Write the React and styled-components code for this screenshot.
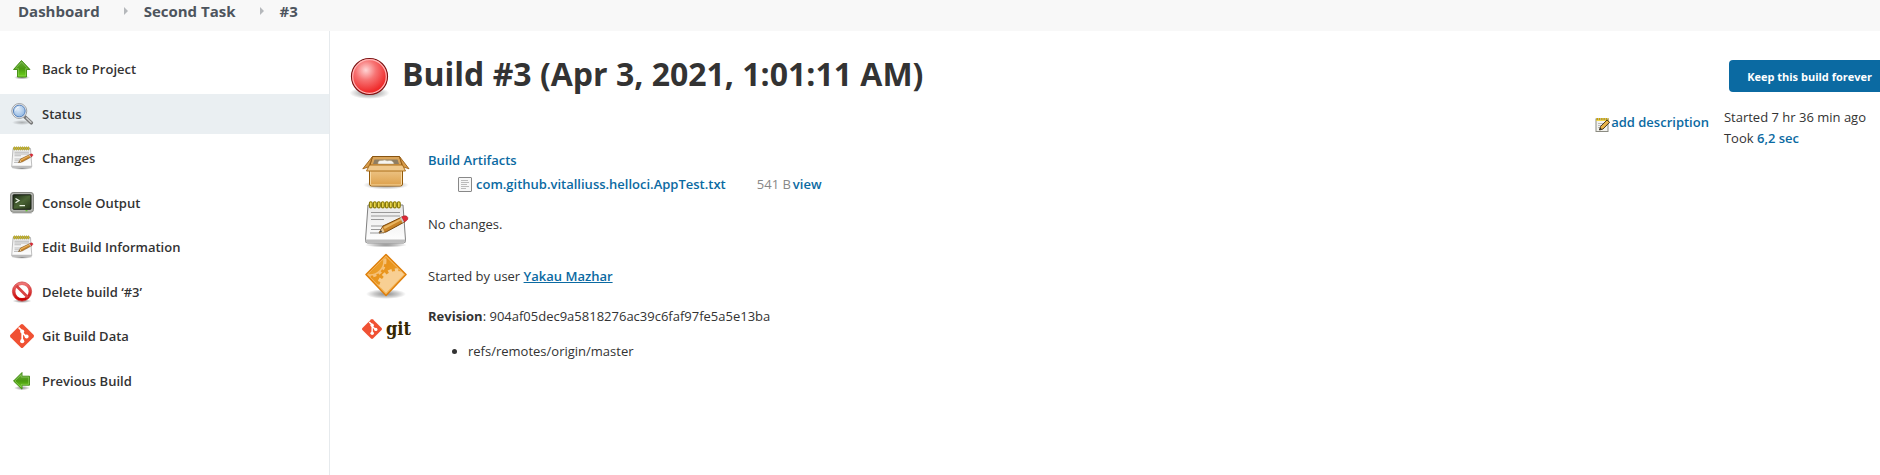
import React from 'react';
import styled, { createGlobalStyle, css } from 'styled-components';

const GlobalStyle = createGlobalStyle`
  * { box-sizing: border-box; }
  html, body { margin: 0; background: #fff; }
  body {
    font-family: "Open Sans", "Noto Sans", sans-serif;
    font-size: 13px;
    line-height: 20px;
    color: #333;
  }
  #root { overflow-x: hidden; }
`;

const Page = styled.div`
  display: flex;
  flex-direction: column;
  min-height: 100vh;
`;

const Breadcrumbs = styled.nav`
  display: flex;
  align-items: center;
  height: 31px;
  padding: 0 18px 10px;
  background: #f8f8f8;
`;

const Crumb = styled.a`
  font-size: 15px;
  font-weight: 700;
  color: #4d545d;
  text-decoration: none;
`;

const CrumbArrow = styled.svg`
  width: 4px;
  height: 8px;
  margin: 0 16px 0 24px;
`;

const Columns = styled.div`
  display: flex;
  flex: 1;
`;

const Sidebar = styled.aside`
  flex: none;
  width: 330px;
  padding-top: 16px;
  border-right: 1px solid #e6eaed;
`;

const TaskList = styled.ul`
  display: grid;
  grid-auto-rows: 1fr;
  align-items: center;
  min-height: 356px;
  margin: 0;
  padding: 0;
  list-style: none;
`;

const TaskLink = styled.a`
  display: flex;
  align-items: center;
  gap: 8px;
  height: 40px;
  padding-left: 10px;
  font-weight: 600;
  color: #333;
  text-decoration: none;
  ${(p) => p.$active && css`background: #eaeff2;`}
`;

const TaskIcon = styled.svg`
  flex: none;
  width: 24px;
  height: 24px;
`;

const Main = styled.main`
  flex: 1;
  display: flex;
  justify-content: space-between;
  padding: 20px 0 24px 20px;
`;

const Title = styled.h1`
  display: flex;
  align-items: center;
  gap: 13px;
  margin: 0 0 47px;
  height: 50px;
  font-size: 32px;
  line-height: 40px;
  font-weight: 700;
  color: #333;
  white-space: nowrap;
`;

const TitleText = styled.span`
  padding-bottom: 4px;
`;

const StatusBall = styled.svg`
  width: 39px;
  height: 44px;
  margin-top: 4px;
`;

const Summary = styled.div`
  display: grid;
  grid-template-columns: 48px auto;
  column-gap: 18px;
  row-gap: 4px;
  justify-content: start;
  align-items: center;
  padding-left: 12px;
`;

const SummaryIcon = styled.svg`
  width: 48px;
  height: 48px;
`;

const SummaryText = styled.div`
  line-height: 20px;
`;

const Link = styled.a`
  font-weight: 600;
  color: #0b6aa2;
  text-decoration: ${(p) => (p.$underlined ? 'underline' : 'none')};
`;

const FileRow = styled.div`
  display: flex;
  align-items: center;
  padding: 4px 0 0 30px;
`;

const FileIcon = styled.svg`
  width: 14px;
  height: 15px;
  margin-right: 4px;
`;

const FileSize = styled.span`
  margin: 0 2px 0 31px;
  color: #888;
`;

const Revision = styled.div`
  padding-top: 2px;
`;

const RefList = styled.ul`
  margin: 15px 0 0;
  padding-left: 40px;
`;

const GitLogo = styled.div`
  display: flex;
  align-items: center;
  gap: 4px;
  margin-bottom: 8px;
  font-family: "DejaVu Serif Condensed", "DejaVu Serif", serif;
  font-size: 18px;
  line-height: 20px;
  font-weight: 700;
  color: #362701;
`;

const GitMarkIcon = styled.svg`
  flex: none;
  width: 20px;
  height: 20px;
`;

const Side = styled.section`
  display: flex;
  flex-direction: column;
  align-items: flex-end;
  padding-top: 9px;
`;

const KeepButton = styled.button`
  height: 32px;
  padding: 1px 8px 0 18px;
  border: 0;
  border-radius: 4px 0 0 4px;
  background: #0b6aa2;
  color: #fff;
  font: 700 11px/20px "Open Sans", "Noto Sans", sans-serif;
  white-space: nowrap;
`;

const Details = styled.div`
  display: flex;
  align-items: center;
  gap: 15px;
  padding: 15px 14px 0 0;
  white-space: nowrap;
`;

const AddDescription = styled.a`
  display: flex;
  align-items: flex-end;
  margin-bottom: 12px;
  font-weight: 600;
  color: #0b6aa2;
  text-decoration: none;
`;

const SmallIcon = styled.svg`
  width: 16px;
  height: 16px;
`;

const Timing = styled.div`
  line-height: 21px;
`;

const Gradients = () => (
  <svg width="0" height="0" style={{ display: 'block' }} aria-hidden="true">
    <defs>
      <linearGradient id="green" x1="0" y1="0" x2="0" y2="1">
        <stop offset="0" stopColor="#6cab45" /><stop offset=".5" stopColor="#4a9a10" /><stop offset="1" stopColor="#6fd51c" />
      </linearGradient>
      <linearGradient id="paper" x1="0" y1="0" x2="0" y2="1">
        <stop offset="0" stopColor="#e9e9e9" /><stop offset="1" stopColor="#fff" />
      </linearGradient>
      <linearGradient id="red" x1="0" y1="0" x2="0" y2="1">
        <stop offset="0" stopColor="#e77" /><stop offset="1" stopColor="#c80000" />
      </linearGradient>
      <radialGradient id="ball" cx=".4" cy=".32" r=".62">
        <stop offset="0" stopColor="#ffd5d5" /><stop offset=".45" stopColor="#f77474" /><stop offset="1" stopColor="#ef2929" />
      </radialGradient>
      <radialGradient id="shade">
        <stop offset="0" stopColor="#000" stopOpacity=".45" /><stop offset=".6" stopColor="#000" stopOpacity=".2" /><stop offset="1" stopColor="#000" stopOpacity="0" />
      </radialGradient>
      <linearGradient id="screen" x1="0" y1="0" x2="1" y2="1">
        <stop offset="0" stopColor="#1d2b17" /><stop offset=".5" stopColor="#4b6535" /><stop offset="1" stopColor="#243319" />
      </linearGradient>
      <linearGradient id="carton" x1="0" y1="0" x2="0" y2="1">
        <stop offset="0" stopColor="#efc98e" /><stop offset="1" stopColor="#dda04a" />
      </linearGradient>
      <radialGradient id="glass" cx=".4" cy=".35" r=".7">
        <stop offset="0" stopColor="#e2edf9" /><stop offset="1" stopColor="#8db5e2" />
      </radialGradient>
      <linearGradient id="amber" x1="0" y1="0" x2="1" y2="1">
        <stop offset="0" stopColor="#e8890b" /><stop offset="1" stopColor="#eaa63a" />
      </linearGradient>
      <clipPath id="diamond"><path d="M24 5 42 22.500 24 41 6 22.500z" /></clipPath>
    </defs>
  </svg>
);

const UpArrow = () => (
  <>
    <ellipse cx="12" cy="20.500" rx="8" ry="2" fill="url(#shade)" />
    <path d="M11.500 3.500 20 12.500h-3.500v7.500h-9v-7.500H3.500z" fill="url(#green)" stroke="#3f8a10" strokeWidth=".9" />
    <path d="M11.600 5 17.500 11.600h-2v7.300h-7v-7.300H5.600z" fill="none" stroke="#a7dc79" strokeWidth=".6" opacity=".7" />
  </>
);

const LeftArrow = () => (
  <>
    <ellipse cx="12" cy="19" rx="8" ry="2.200" fill="url(#shade)" />
    <path d="M3.500 12 12 3.500v3.700h7.500v9H12v4z" fill="url(#green)" stroke="#3f8a10" strokeWidth=".9" />
    <path d="M5 12 11.200 5.700v2.400h7.400v7.200h-7.400v2.700z" fill="none" stroke="#b3e48a" strokeWidth=".6" opacity=".7" />
  </>
);

const Magnifier = () => (
  <>
    <ellipse cx="12" cy="20.500" rx="10" ry="2.500" fill="url(#shade)" opacity=".6" />
    <path d="m15 15 6.300 5.800" stroke="#777" strokeWidth="3.600" strokeLinecap="round" />
    <path d="m16.500 16 4.500 4.200" stroke="#ccc" strokeWidth="1.500" strokeLinecap="round" />
    <circle cx="9.300" cy="9" r="7.500" fill="#eee" stroke="#8e9096" strokeWidth=".8" />
    <circle cx="9.300" cy="9" r="5.900" fill="url(#glass)" stroke="#4c79b5" strokeWidth=".9" />
    <path d="M5.500 8.500c.5-2.500 2-3.500 4-3.500" stroke="#fff" fill="none" opacity=".8" />
  </>
);

const Notepad = () => (
  <>
    <ellipse cx="24" cy="45" rx="21" ry="2.500" fill="url(#shade)" />
    <path d="M6 5h35l2.500 35q.3 3-2 3h-36q-2.300 0-2-3z" fill="url(#paper)" stroke="#808080" />
    <path d="M3.500 39.500h39.800l.2 3h-40z" fill="#bdbdbd" />
    <path d="M9 12.500h29M9 16h29M9 19.500h13M9 26h26M9 29.500h18M8 33h14" stroke="#999" strokeWidth="1.200" />
    {[8, 12, 16, 20, 24, 28, 32, 36].map((x) => (
      <rect key={x} x={x - 0.6} y="1.700" width="2.800" height="6.200" rx="1.400" fill="#e9d64c" stroke="#857500" strokeWidth="1.100" />
    ))}
    <path d="m17 33 4-7L40 17l3 4.700L24 32z" fill="#c98428" stroke="#7b4a0e" />
    <path d="m21.500 27 18.300-9 .8 1.500-18 9.500z" fill="#e9b663" />
    <path d="m17 33 3.500-5.500 2 4.700z" fill="#e6c99a" />
    <path d="m17 33 2-3 1 2z" fill="#333" />
    <path d="m39.500 17 2.200-1.100q3.300-.7 4.100 1.800.2 2-1.200 2.800L42 22z" fill="#df2936" stroke="#a3222b" strokeWidth=".7" />
    <path d="m38 17.800 1.500-.8 2.600 5-1.500.8z" fill="#ccc" />
  </>
);

const NotePencil = () => (
  <>
    <rect x="1" y="3" width="12" height="12.500" fill="#f2f2ee" stroke="#8b8b82" />
    <path d="M3 7.500h7M3 9.500h5M3 11.500h4" stroke="#bbb" />
    <path d="M1.500 3.500h12" stroke="#c9a400" strokeWidth="3" strokeDasharray="1.500 .8" />
    <path d="M1.500 4.500h12" stroke="#f2d94c" />
    <path d="m4.500 14 1-3.500L12 4l2.600 2.300L8 13z" fill="#e9b44a" stroke="#4b3a1d" />
    <path d="m4.500 14 .7-2.300 1.500 1.400z" fill="#222" />
  </>
);

const Terminal = () => (
  <>
    <path d="M3 21.500h18l1 1H2z" fill="#bbb" />
    <rect x=".6" y="1.500" width="22.800" height="19.700" rx="2.500" fill="#b3b5b0" stroke="#83857f" />
    <rect x="3" y="3.800" width="18" height="14.500" rx=".6" fill="url(#screen)" stroke="#171d13" />
    <path d="m5.500 7.500 3.500 2-3.500 2.200M9.500 14.700h5.500" fill="none" stroke="#e9f1e2" strokeWidth="1.300" />
    <path d="M15.500 19.700h2" stroke="#62c82a" strokeWidth="1.200" />
  </>
);

const NoEntry = () => (
  <>
    <ellipse cx="12" cy="21" rx="9.500" ry="2" fill="url(#shade)" />
    <circle cx="12" cy="11.500" r="8.100" fill="#fff" stroke="url(#red)" strokeWidth="3" />
    <path d="m6.300 5.800 11.500 11.500" stroke="#d84343" strokeWidth="2.800" />
    <circle cx="12" cy="11.500" r="9.600" fill="none" stroke="#c33" strokeWidth=".7" />
  </>
);

const GitMark = () => (
  <>
    <path d="M10.800.5q1.200-1 2.400 0l10.300 10.300q1 1.200 0 2.400L13.200 23.500q-1.200 1-2.400 0L.5 13.200q-1-1.200 0-2.400z" fill="#f05133" />
    <path d="m8.600 3.500 3.600 3.600v9.900M12.200 8.700l4 4" fill="none" stroke="#fff" strokeWidth="1.700" />
    <circle cx="12.200" cy="7.500" r="2" fill="#fff" />
    <circle cx="12.200" cy="17.200" r="2.100" fill="#fff" />
    <circle cx="16.600" cy="12.500" r="2" fill="#fff" />
  </>
);

const PackageBox = () => (
  <>
    <ellipse cx="24" cy="37" rx="23" ry="4.500" fill="url(#shade)" />
    <path d="M10.500 8.500h27l3 10.500h-33z" fill="#d9a45a" stroke="#875411" />
    <path d="M12.500 11.500h23l1.500 4.500H11z" fill="#8f7e62" />
    <path d="M16 16q-.5-4 4-3.500 3-1.200 5 .3 6-1.500 7 3.200z" fill="#f7f5ef" stroke="#b9aa8b" strokeWidth=".6" />
    <path d="M10.500 8.500 7 18.800.8 20.800zM37.500 8.500l3.500 10.300 6 2z" fill="#d99d4b" stroke="#995f15" strokeWidth=".9" strokeLinejoin="round" />
    <path d="M7.500 19.500h33V36q0 2-2 2h-29q-2 0-2-2z" fill="url(#carton)" stroke="#935908" />
    <path d="M8.500 20.500h31V36q0 1-1 1h-29q-1 0-1-1z" fill="none" stroke="#f7d9a4" />
    <path d="M7.500 17h33l3 6h-39z" fill="#f0c98c" stroke="#a56711" strokeWidth=".9" />
  </>
);

const GearDiamond = () => (
  <>
    <ellipse cx="24" cy="42" rx="20" ry="5" fill="url(#shade)" />
    <path d="M24 2.500 44 22.500 24 43.500 4 22.500z" fill="#f6b95e" stroke="#df7f0b" strokeWidth="1.500" strokeLinejoin="round" />
    <path d="M24 5 42 22.500 24 41 6 22.500z" fill="url(#amber)" />
    <g clipPath="url(#diamond)">
      <circle cx="8" cy="9" r="14.500" fill="none" stroke="#f6c27a" strokeWidth="4" strokeDasharray="3 2.500" />
      <circle cx="8" cy="9" r="14" fill="#eb9c27" stroke="#f5bf74" strokeWidth="1.500" />
      <circle cx="35" cy="37" r="18" fill="#f8cf93" />
      <circle cx="35" cy="37" r="18.500" fill="none" stroke="#f8cf93" strokeWidth="4.500" strokeDasharray="3.500 3" />
    </g>
  </>
);

const TextFile = () => (
  <>
    <rect x=".5" y=".5" width="13" height="14" rx=".5" fill="#f7f7f7" stroke="#888" />
    <path d="M3 3.500h7M3 5.500h8M3 7.500h6M3 9.500h8M3 11.500h5" stroke="#bbb" />
  </>
);

const tasks = [
  { label: 'Back to Project', Icon: UpArrow },
  { label: 'Status', Icon: Magnifier, active: true },
  { label: 'Changes', Icon: Notepad, box: '0 0 48 48' },
  { label: 'Console Output', Icon: Terminal },
  { label: 'Edit Build Information', Icon: Notepad, box: '0 0 48 48' },
  { label: 'Delete build ‘#3’', Icon: NoEntry },
  { label: 'Git Build Data', Icon: GitMark },
  { label: 'Previous Build', Icon: LeftArrow },
];

const Arrow = () => (
  <CrumbArrow viewBox="0 0 4 8" aria-hidden="true"><path d="M0 0 4 4 0 8z" fill="#b5b8bb" /></CrumbArrow>
);

export default function App() {
  return (
    <Page>
      <GlobalStyle />
      <Gradients />
      <Breadcrumbs aria-label="Breadcrumb">
        <Crumb href="#dashboard">Dashboard</Crumb>
        <Arrow />
        <Crumb href="#second-task">Second Task</Crumb>
        <Arrow />
        <Crumb href="#build-3">#3</Crumb>
      </Breadcrumbs>
      <Columns>
        <Sidebar>
          <TaskList>
            {tasks.map(({ label, Icon, active, box }) => (
              <li key={label}>
                <TaskLink href="#task" $active={active}>
                  <TaskIcon viewBox={box || '0 0 24 24'} aria-hidden="true"><Icon /></TaskIcon>
                  {label}
                </TaskLink>
              </li>
            ))}
          </TaskList>
        </Sidebar>
        <Main>
          <div>
            <Title>
              <StatusBall viewBox="0 0 39 44" aria-hidden="true">
                <ellipse cx="19.500" cy="37" rx="20" ry="6" fill="url(#shade)" />
                <circle cx="19.500" cy="20.500" r="18" fill="url(#ball)" stroke="#7a1414" strokeWidth="1.200" />
                <circle cx="19.500" cy="20.500" r="16.800" fill="none" stroke="#ffb5b5" strokeWidth="1.200" />
              </StatusBall>
              <TitleText>Build #3 (Apr 3, 2021, 1:01:11 AM)</TitleText>
            </Title>
            <Summary>
              <SummaryIcon viewBox="0 0 48 48" aria-hidden="true"><PackageBox /></SummaryIcon>
              <SummaryText>
                <Link href="#artifacts">Build Artifacts</Link>
                <FileRow>
                  <FileIcon viewBox="0 0 14 15" aria-hidden="true"><TextFile /></FileIcon>
                  <Link href="#file">com.github.vitalliuss.helloci.AppTest.txt</Link>
                  <FileSize>541 B</FileSize>
                  <Link href="#view">view</Link>
                </FileRow>
              </SummaryText>

              <SummaryIcon viewBox="0 0 48 48" aria-hidden="true"><Notepad /></SummaryIcon>
              <SummaryText>No changes.</SummaryText>

              <SummaryIcon viewBox="0 0 48 48" aria-hidden="true"><GearDiamond /></SummaryIcon>
              <SummaryText>Started by user <Link href="#user" $underlined>Yakau Mazhar</Link></SummaryText>

              <GitLogo>
                <GitMarkIcon viewBox="0 0 24 24" aria-hidden="true"><GitMark /></GitMarkIcon>
                git
              </GitLogo>
              <Revision>
                <b>Revision</b>: 904af05dec9a5818276ac39c6faf97fe5a5e13ba
                <RefList>
                  <li>refs/remotes/origin/master</li>
                </RefList>
              </Revision>
            </Summary>
          </div>
          <Side>
            <KeepButton type="button">Keep this build forever</KeepButton>
            <Details>
              <AddDescription href="#description">
                <SmallIcon viewBox="0 0 16 16" aria-hidden="true"><NotePencil /></SmallIcon>
                add description
              </AddDescription>
              <Timing>
                Started 7 hr 36 min ago<br />
                Took <Link href="#trend">6,2 sec</Link>
              </Timing>
            </Details>
          </Side>
        </Main>
      </Columns>
    </Page>
  );
}
